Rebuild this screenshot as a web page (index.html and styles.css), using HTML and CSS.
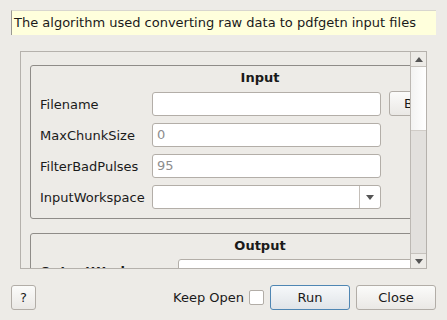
FILE: index.html
```html
<!DOCTYPE html>
<html>
<head>
<meta charset="utf-8">
<link rel="stylesheet" href="styles.css">
</head>
<body>
<div class="dialog">
  <div class="desc">The algorithm used converting raw data to pdfgetn input files</div>
  <div class="scrollarea">
    <div class="viewport">
      <div class="group">
        <div class="gtitle">Input</div>
        <div class="grid">
          <div class="lbl">Filename</div>
          <div class="field"></div>
          <div class="btn browse">Browse</div>
          <div class="lbl">MaxChunkSize</div>
          <div class="field"><span class="ph">0</span></div>
          <div></div>
          <div class="lbl">FilterBadPulses</div>
          <div class="field"><span class="ph">95</span></div>
          <div></div>
          <div class="lbl">InputWorkspace</div>
          <div class="field combo"><span class="cval"></span><span class="cbtn"><svg width="8" height="5" viewBox="0 0 8 5"><path d="M0 0H8L4 5Z" fill="#555"/></svg></span></div>
          <div></div>
        </div>
      </div>
      <div class="group out">
        <div class="gtitle">Output</div>
        <div class="grid grid-out">
          <div class="lbl bold">OutputWorkspace</div>
          <div class="field"></div>
        </div>
      </div>
    </div>
    <div class="vbar">
      <div class="arrow up"><svg width="8" height="5" viewBox="0 0 8 5"><path d="M0 5H8L4 0Z" fill="#555"/></svg></div>
      <div class="track">
        <div class="handle"></div>
      </div>
      <div class="arrow down"><svg width="8" height="5" viewBox="0 0 8 5"><path d="M0 0H8L4 5Z" fill="#555"/></svg></div>
    </div>
  </div>
  <div class="footer">
    <div class="btn help">?</div>
    <div class="spacer"></div>
    <span class="keep">Keep Open</span>
    <span class="check"></span>
    <div class="btn run">Run</div>
    <div class="btn close">Close</div>
  </div>
</div>
</body>
</html>
```
FILE: styles.css
```css
html, body {
  margin: 0;
  padding: 0;
  background: #edebe7;
  font-family: "DejaVu Sans", sans-serif;
  font-size: 12px;
  color: #1a1a1a;
}
.dialog {
  width: 447px;
  height: 320px;
  overflow: hidden;
  padding-top: 10px;
  box-sizing: border-box;
}
.desc {
  margin: 0 11px 0 11px;
  height: 25px;
  box-sizing: border-box;
  background: #ffffdc;
  border-left: 1px solid #9a9893;
  border-top: 1px solid #d8d6cf;
  padding-left: 2px;
  line-height: 23px;
  font-size: 13px;
  white-space: nowrap;
}
.scrollarea {
  margin: 16px 0 0 20px;
  width: 407px;
  height: 218px;
  box-sizing: border-box;
  border: 1px solid #b5b1ac;
  display: flex;
}
.viewport {
  flex: 1;
  overflow: hidden;
  padding: 13px 0 0 9px;
  min-width: 0;
}
.group {
  width: 460px;
  box-sizing: border-box;
  border: 1px solid #8f8c88;
  border-radius: 3px;
  padding: 0 9px 9px 9px;
}
.group.out {
  margin-top: 14px;
}
.gtitle {
  text-align: center;
  font-weight: bold;
  font-size: 13px;
  height: 25px;
  line-height: 24px;
}
.grid {
  display: grid;
  grid-template-columns: 112px 229px 1fr;
  row-gap: 7px;
  align-items: center;
}
.grid-out {
  grid-template-columns: 138px 1fr;
}
.lbl {
  font-size: 13px;
  white-space: nowrap;
  padding-top: 1px;
}
.lbl.bold {
  font-weight: bold;
}
.field {
  height: 24px;
  box-sizing: border-box;
  background: #fff;
  border: 1px solid #b3aea8;
  border-radius: 3px;
  padding-left: 4px;
  line-height: 22px;
  font-size: 13px;
}
.ph {
  color: #8d8d8d;
}
.combo {
  display: flex;
  padding-left: 0;
}
.cval {
  flex: 1;
}
.cbtn {
  width: 20px;
  border-left: 1px solid #c4bfb9;
  display: flex;
  align-items: center;
  justify-content: center;
}
.btn {
  box-sizing: border-box;
  height: 25px;
  border: 1px solid #b2ada7;
  border-radius: 3px;
  background: linear-gradient(#fbfbfa, #eae8e5);
  text-align: center;
  line-height: 23px;
  font-size: 13px;
}
.browse {
  margin-left: 8px;
  width: 80px;
  text-align: left;
  padding-left: 14px;
}
.vbar {
  width: 15px;
  border-left: 1px solid #bcb8b3;
  display: flex;
  flex-direction: column;
  background: #e2e0dd;
}
.arrow {
  height: 14px;
  background: #edebe7;
  display: flex;
  align-items: center;
  justify-content: center;
}
.arrow.up {
  border-bottom: 1px solid #c6c2bd;
}
.arrow.down {
  border-top: 1px solid #c6c2bd;
}
.track {
  flex: 1;
}
.handle {
  height: 63px;
  background: linear-gradient(90deg, #f3f3f2, #ffffff);
  border-bottom: 1px solid #d0ccc7;
}
.footer {
  display: flex;
  align-items: center;
  margin: 16px 11px 0 11px;
  height: 25px;
}
.help {
  width: 25px;
}
.spacer {
  flex: 1;
}
.keep {
  font-size: 13px;
  margin-right: 5px;
}
.check {
  width: 13px;
  height: 13px;
  background: #fff;
  border: 1px solid #b2ada7;
  border-radius: 2px;
  margin-right: 6px;
}
.run {
  width: 80px;
  border-color: #4f86b3;
  background: linear-gradient(#f6f8fa, #e0e4e8);
}
.close {
  width: 80px;
  margin-left: 6px;
}
```
